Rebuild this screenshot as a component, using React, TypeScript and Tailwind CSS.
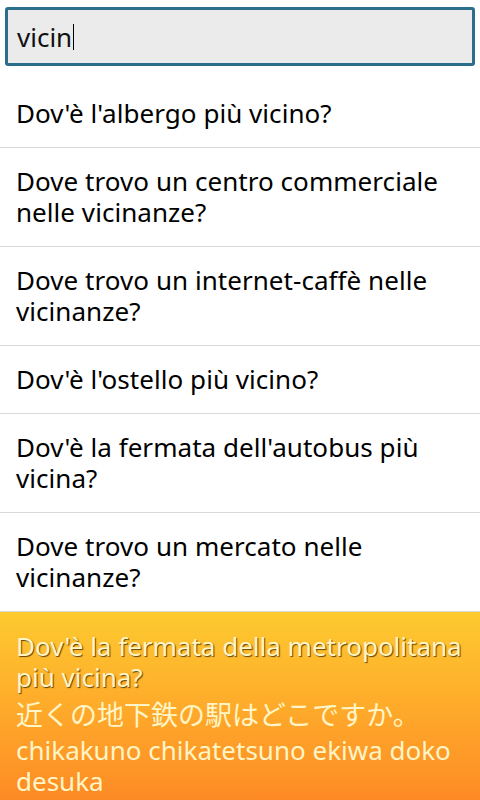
const items: string[] = [
  "Dov'è l'albergo più vicino?",
  "Dove trovo un centro commerciale nelle vicinanze?",
  "Dove trovo un internet-caffè nelle vicinanze?",
  "Dov'è l'ostello più vicino?",
  "Dov'è la fermata dell'autobus più vicina?",
  "Dove trovo un mercato nelle vicinanze?",
];

export default function App() {
  return (
    <div className="w-[480px] h-[800px] overflow-hidden bg-white flex flex-col font-['Noto_Sans','Noto_Sans_CJK_JP',sans-serif] text-black">
      {/* search */}
      <div className="h-[80px] shrink-0 pt-[7px] pl-[5px] pr-[5px]">
        <div className="h-[59px] rounded-[3px] border-[3px] border-[#2b6f8d] bg-[#ebebeb] flex items-center pl-[9px]">
          <span className="text-[26px] leading-none text-[#111]">vicin</span>
          <span className="w-px h-[26px] bg-black ml-[1px]" />
        </div>
      </div>

      {/* results */}
      <ul className="shrink-0">
        {items.map((t, i) => (
          <li
            key={i}
            className="border-b border-[#d9d9d9] pl-4 pr-5 py-[18px] text-[26px] leading-[31px] tracking-[0.05px]"
          >
            {t}
          </li>
        ))}
      </ul>

      {/* selected translation */}
      <div className="flex-1 bg-gradient-to-b from-[#fdca30] to-[#fd8a25] pl-4 pr-3 pt-[19px] text-[26px] text-[#fff5c6]">
        <p className="leading-[31px] [text-shadow:1px_1px_1px_rgba(70,45,0,0.85)]">
          Dov'è la fermata della metropolitana più vicina?
        </p>
        <p className="leading-[38px] mt-[3px] text-[27px]">近くの地下鉄の駅はどこですか。</p>
        <p className="leading-[31px] mt-[1px]">chikakuno chikatetsuno ekiwa doko desuka</p>
      </div>
    </div>
  );
}
